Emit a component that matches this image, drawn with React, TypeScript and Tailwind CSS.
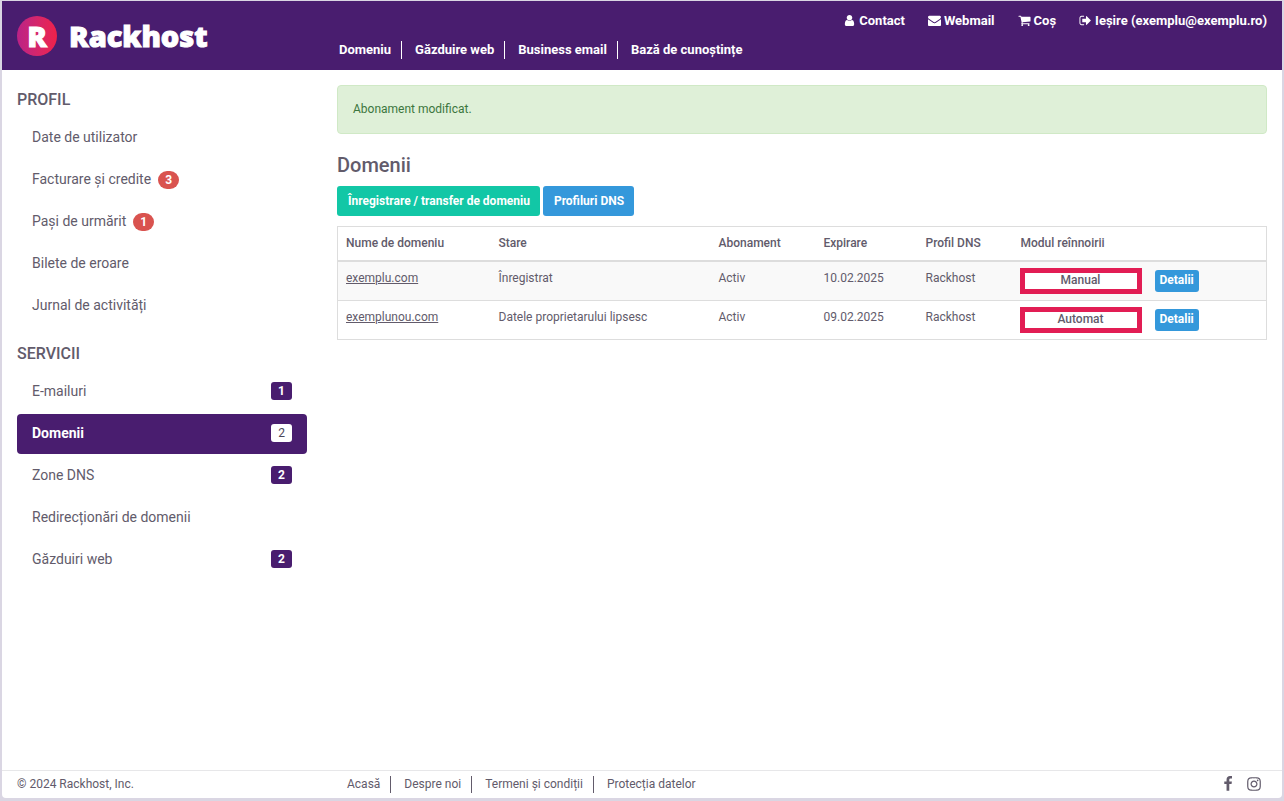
import type { ReactNode } from 'react';

const icons = {
    user: 'M1536 1399q0 109-62.5 187t-150.5 78h-854q-88 0-150.5-78t-62.5-187q0-85 8.5-160.5t31.5-152 58.5-131 94-89 134.5-34.5q131 128 313 128t313-128q76 0 134.5 34.5t94 89 58.5 131 31.5 152 8.5 160.5zm-256-887q0 159-112.5 271.5t-271.5 112.5-271.5-112.5-112.5-271.5 112.5-271.5 271.5-112.5 271.5 112.5 112.5 271.5z',
    envelope:
        'M1792 710v794q0 66-47 113t-113 47h-1472q-66 0-113-47t-47-113v-794q44 49 101 87 362 246 497 345 57 42 92.5 65.5t94.5 48 110 24.5h2q51 0 110-24.5t94.5-48 92.5-65.5q170-123 498-345 57-39 100-87zm0-294q0 79-49 151t-122 123q-376 261-468 325-10 7-42.5 31t-54 38.5-52 32.5-57.5 27-50 9h-2q-23 0-50-9t-57.5-27-52-32.5-54-38.5-42.5-31q-91-64-262-182.5t-205-142.5q-62-42-117-115.5t-55-136.5q0-78 41.5-130t118.5-52h1472q65 0 112.5 47t47.5 113z',
    cart: 'M704 1536q0 52-38 90t-90 38-90-38-38-90 38-90 90-38 90 38 38 90zm896 0q0 52-38 90t-90 38-90-38-38-90 38-90 90-38 90 38 38 90zm128-1088v512q0 24-16.5 42.5t-40.5 21.5l-1044 122q13 60 13 70 0 16-24 64h920q26 0 45 19t19 45-19 45-45 19h-1024q-26 0-45-19t-19-45q0-11 8-31.5t16-36 21.5-40 15.5-29.5l-177-823h-204q-26 0-45-19t-19-45 19-45 45-19h256q16 0 28.5 6.5t19.5 15.5 13 24.5 8 26 5.5 29.5 4.5 26h1201q26 0 45 19t19 45z',
    signOut:
        'M704 1440q0 4 1 20t.5 26.5-3 23.5-10 19.5-20.5 6.5h-320q-119 0-203.5-84.5t-84.5-203.5v-704q0-119 84.5-203.5t203.5-84.5h320q13 0 22.5 9.5t9.5 22.5q0 4 1 20t.5 26.5-3 23.5-10 19.5-20.5 6.5h-320q-66 0-113 47t-47 113v704q0 66 47 113t113 47h312l11.5 1 11.5 3 8 5.5 7 9 2 13.5zm928-544q0 26-19 45l-544 544q-19 19-45 19t-45-19-19-45v-288h-448q-26 0-45-19t-19-45v-384q0-26 19-45t45-19h448v-288q0-26 19-45t45-19 45 19l544 544q19 19 19 45z',
    facebook:
        'M1343 12v264h-157q-86 0-116 36t-30 108v189h293l-39 296h-254v759h-306v-759h-255v-296h255v-218q0-186 104-288.5t277-102.5q147 0 228 12z',
    instagram:
        'M1152 896q0-106-75-181t-181-75-181 75-75 181 75 181 181 75 181-75 75-181zm138 0q0 164-115 279t-279 115-279-115-115-279 115-279 279-115 279 115 115 279zm108-410q0 38-27 65t-65 27-65-27-27-65 27-65 65-27 65 27 27 65zm-502-220q-7 0-76.5-.5t-105.5 0-96.5 3-103 10-71.5 18.5q-50 20-88 58t-58 88q-11 29-18.5 71.5t-10 103-3 96.5 0 105.5.5 76.5-.5 76.5 0 105.5 3 96.5 10 103 18.5 71.5q20 50 58 88t88 58q29 11 71.5 18.5t103 10 96.5 3 105.5 0 76.5-.5 76.5.5 105.5 0 96.5-3 103-10 71.5-18.5q50-20 88-58t58-88q11-29 18.5-71.5t10-103 3-96.5 0-105.5-.5-76.5.5-76.5 0-105.5-3-96.5-10-103-18.5-71.5q-20-50-58-88t-88-58q-29-11-71.5-18.5t-103-10-96.5-3-105.5 0-76.5.5zm768 630q0 229-5 317-10 208-124 322t-322 124q-88 5-317 5t-317-5q-208-10-322-124t-124-322q-5-88-5-317t5-317q10-208 124-322t322-124q88-5 317-5t317 5q208 10 322 124t124 322q5 88 5 317z',
};

type IconName = keyof typeof icons;

interface MenuItem {
    label: string;
    alert?: number;
    count?: number;
    active?: boolean;
}

const topLinks: { icon: IconName; label: string }[] = [
    { icon: 'user', label: 'Contact' },
    { icon: 'envelope', label: 'Webmail' },
    { icon: 'cart', label: 'Coș' },
    { icon: 'signOut', label: 'Ieșire (exemplu@exemplu.ro)' },
];

const mainLinks = ['Domeniu', 'Găzduire web', 'Business email', 'Bază de cunoștințe'];
const footerLinks = ['Acasă', 'Despre noi', 'Termeni și condiții', 'Protecția datelor'];

const profileItems: MenuItem[] = [
    { label: 'Date de utilizator' },
    { label: 'Facturare și credite', alert: 3 },
    { label: 'Pași de urmărit', alert: 1 },
    { label: 'Bilete de eroare' },
    { label: 'Jurnal de activități' },
];

const serviceItems: MenuItem[] = [
    { label: 'E-mailuri', count: 1 },
    { label: 'Domenii', count: 2, active: true },
    { label: 'Zone DNS', count: 2 },
    { label: 'Redirecționări de domenii' },
    { label: 'Găzduiri web', count: 2 },
];

const domains = [
    { name: 'exemplu.com', status: 'Înregistrat', expires: '10.02.2025', renewal: 'Manual' },
    { name: 'exemplunou.com', status: 'Datele proprietarului lipsesc', expires: '09.02.2025', renewal: 'Automat' },
];

function Icon({ name, className }: { name: IconName; className: string }) {
    return (
        <svg viewBox="0 0 1792 1792" fill="currentColor" className={className} aria-hidden="true">
            <path d={icons[name]} />
        </svg>
    );
}

function Logo() {
    return (
        <a
            href="#"
            className="flex items-center gap-3 font-['Open_Sans',sans-serif] text-[29px] leading-10 font-extrabold text-white [-webkit-text-stroke:1px_white]"
            aria-label="Rackhost"
        >
            <span className="flex size-10 items-center justify-center rounded-full bg-linear-to-r from-[#bb2186] to-[#ef2148]">
                R
            </span>
            <span>Rackhost</span>
        </a>
    );
}

function Menu({ title, items }: { title: string; items: MenuItem[] }) {
    return (
        <section>
            <h2 className="mb-1.5 text-base font-medium">{title}</h2>
            <ul className="flex flex-col gap-0.5">
                {items.map((item) => (
                    <li key={item.label}>
                        <a
                            href="#"
                            className={`flex h-10 items-center rounded px-[15px] pb-0.5 text-sm ${item.active ? 'bg-[#491d6f] font-bold text-white' : ''}`}
                        >
                            {item.label}
                            {item.alert && (
                                <span className="mt-0.5 ml-[7px] rounded-full bg-[#d9534f] px-[7px] text-[12px] leading-[18px] font-bold text-white">
                                    {item.alert}
                                </span>
                            )}
                            {item.count && (
                                <span
                                    className={`ml-auto rounded-[3px] px-[7px] text-[12px] leading-[18px] ${item.active ? 'bg-white font-normal text-[#4a4658]' : 'bg-[#491d6f] font-bold text-white'}`}
                                >
                                    {item.count}
                                </span>
                            )}
                        </a>
                    </li>
                ))}
            </ul>
        </section>
    );
}

function Th({ children }: { children?: ReactNode }) {
    return <th className="px-2 py-2 text-left font-medium">{children}</th>;
}

function Td({ children }: { children: ReactNode }) {
    return <td className="px-2 pt-2 align-top">{children}</td>;
}

export default function App() {
    return (
        <div className="flex min-h-screen flex-col bg-[#dad6e3] px-0.5 pt-px pb-[3px] font-[Roboto,sans-serif] text-[12px] leading-[17px] text-[#625b6b]">
            <div className="flex grow flex-col overflow-hidden rounded-b bg-white">
                <header className="flex h-[69px] bg-[#491d6f] text-[13px] font-bold text-white">
                    <div className="w-1/4 px-[15px] pt-[15px]">
                        <Logo />
                    </div>
                    <div className="flex w-3/4 flex-col px-[15px] pt-[11px]">
                        <nav className="flex justify-end gap-[23px]">
                            {topLinks.map((link) => (
                                <a key={link.label} href="#" className="flex items-center gap-[3px]">
                                    <Icon name={link.icon} className="size-[13px]" />
                                    {link.label}
                                </a>
                            ))}
                        </nav>
                        <nav className="mt-3 flex leading-[18px]">
                            {mainLinks.map((label) => (
                                <a
                                    key={label}
                                    href="#"
                                    className="border-r border-white pr-2.5 pl-[13px] first:pl-0.5 last:border-r-0"
                                >
                                    {label}
                                </a>
                            ))}
                        </nav>
                    </div>
                </header>

                <div className="flex grow">
                    <aside className="flex w-1/4 flex-col gap-4 px-[15px] pt-[18px]">
                        <Menu title="PROFIL" items={profileItems} />
                        <Menu title="SERVICII" items={serviceItems} />
                    </aside>

                    <main className="w-3/4 px-[15px] pt-[15px]">
                        <div role="status" className="rounded border border-[#d0e9c6] bg-[#dff0d8] px-[15px] py-[15px] text-[#3c763d]">
                            Abonament modificat.
                        </div>

                        <h1 className="mt-[19px] text-xl leading-6 font-medium">Domenii</h1>

                        <div className="mt-[9px] flex gap-[3px] font-bold text-white">
                            <button type="button" className="h-[30px] rounded-[3px] bg-[#12c7a6] pr-2.5 pl-[11px]">
                                Înregistrare / transfer de domeniu
                            </button>
                            <button type="button" className="h-[30px] rounded-[3px] bg-[#3498db] pr-2.5 pl-[11px]">
                                Profiluri DNS
                            </button>
                        </div>

                        <table className="mt-2.5 w-full table-fixed border-collapse border border-[#ddd]">
                            <colgroup>
                                <col className="w-[153px]" />
                                <col className="w-[220px]" />
                                <col className="w-[105px]" />
                                <col className="w-[102px]" />
                                <col className="w-[95px]" />
                                <col className="w-[134px]" />
                                <col />
                            </colgroup>
                            <thead>
                                <tr className="border-b-2 border-[#ddd]">
                                    <Th>Nume de domeniu</Th>
                                    <Th>Stare</Th>
                                    <Th>Abonament</Th>
                                    <Th>Expirare</Th>
                                    <Th>Profil DNS</Th>
                                    <Th>Modul reînnoirii</Th>
                                    <Th />
                                </tr>
                            </thead>
                            <tbody>
                                {domains.map((domain) => (
                                    <tr key={domain.name} className="h-[39px] border-b border-[#ddd] odd:bg-[#f9f9f9]">
                                        <Td>
                                            <a href="#" className="underline">
                                                {domain.name}
                                            </a>
                                        </Td>
                                        <Td>{domain.status}</Td>
                                        <Td>Activ</Td>
                                        <Td>{domain.expires}</Td>
                                        <Td>Rackhost</Td>
                                        <td className="pr-[5px] pl-[7px] align-middle">
                                            <div className="flex h-[26px] items-center justify-center border-[5px] border-[#e21d54] bg-white font-medium">
                                                {domain.renewal}
                                            </div>
                                        </td>
                                        <td className="px-2 align-middle">
                                            <button
                                                type="button"
                                                className="block h-[22px] rounded-[3px] bg-[#3498db] px-[5px] font-bold text-white"
                                            >
                                                Detalii
                                            </button>
                                        </td>
                                    </tr>
                                ))}
                            </tbody>
                        </table>
                    </main>
                </div>

                <footer className="flex h-7 border-t border-[#e7e7e9] pt-[5px]">
                    <p className="w-1/4 px-[15px]">© 2024 Rackhost, Inc.</p>
                    <div className="flex w-3/4 justify-between pr-5 pl-[25px]">
                        <nav className="flex">
                            {footerLinks.map((label) => (
                                <a
                                    key={label}
                                    href="#"
                                    className="h-[17px] border-r border-[#625b6b] pr-2.5 pl-[13px] first:pl-0 last:border-r-0"
                                >
                                    {label}
                                </a>
                            ))}
                        </nav>
                        <div className="flex gap-2.5">
                            <a href="#" aria-label="Facebook">
                                <Icon name="facebook" className="size-4" />
                            </a>
                            <a href="#" aria-label="Instagram">
                                <Icon name="instagram" className="size-4" />
                            </a>
                        </div>
                    </div>
                </footer>
            </div>
        </div>
    );
}
